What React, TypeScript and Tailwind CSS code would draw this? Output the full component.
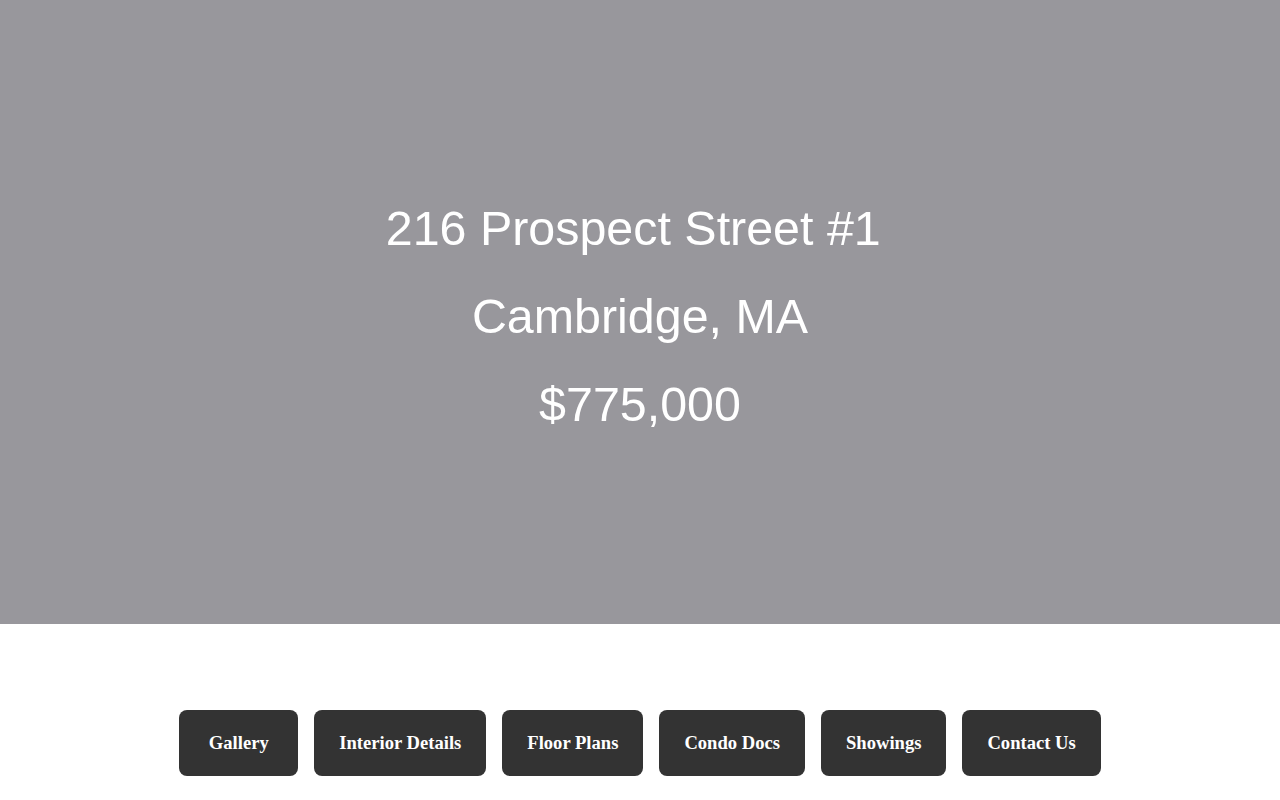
export default function App() {
  const links = ['Gallery', 'Interior Details', 'Floor Plans', 'Condo Docs', 'Showings', 'Contact Us'];

  return (
    <div className="min-h-screen bg-white">
      <section className="flex h-[624px] flex-col items-center justify-center bg-[#98979c] pt-2 text-white font-['Liberation_Sans',Arial,sans-serif]">
        <h1 className="whitespace-pre text-[48.4px] font-normal leading-[88px]">{'216 Prospect Street #1 '}</h1>
        <h2 className="text-[48.4px] font-normal leading-[88px]">Cambridge, MA</h2>
        <p className="text-[48.4px] leading-[88px]">$775,000</p>
      </section>

      <nav className="flex justify-center gap-4 pt-[86px]">
        {links.map((label) => (
          <a
            key={label}
            href="#"
            className="flex h-[66px] min-w-[119px] items-center justify-center rounded-lg bg-[#333333] px-[25px] text-[18.6px] font-bold text-white font-['Liberation_Serif','Times_New_Roman',serif]"
          >
            {label}
          </a>
        ))}
      </nav>
    </div>
  );
}
